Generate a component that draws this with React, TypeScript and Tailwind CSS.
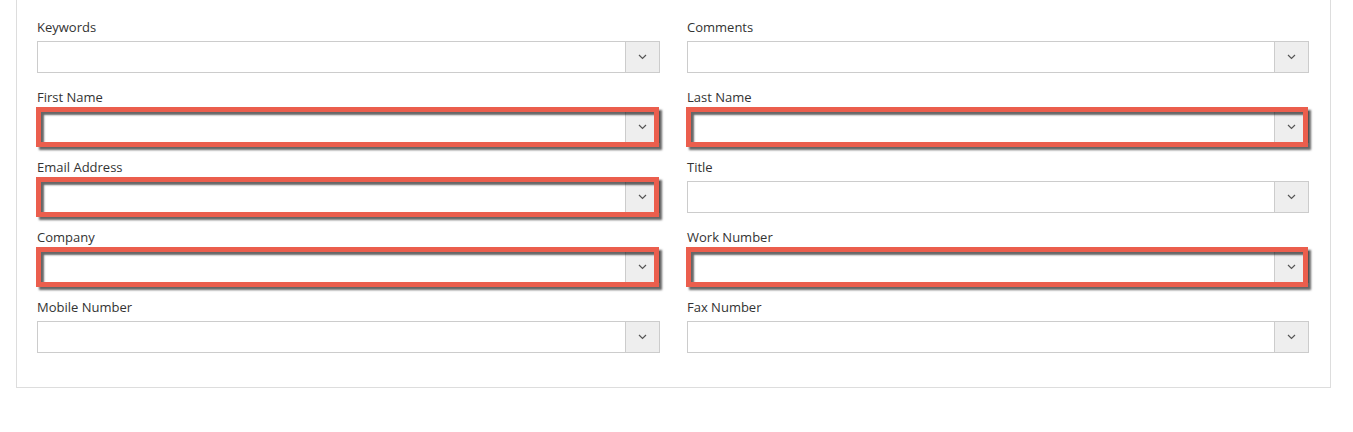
import React from "react";

type F = { label: string; hl?: boolean };

const left: F[] = [
  { label: "Keywords" },
  { label: "First Name", hl: true },
  { label: "Email Address", hl: true },
  { label: "Company", hl: true },
  { label: "Mobile Number" },
];
const right: F[] = [
  { label: "Comments" },
  { label: "Last Name", hl: true },
  { label: "Title" },
  { label: "Work Number", hl: true },
  { label: "Fax Number" },
];

function Field({ label, hl }: F) {
  return (
    <div className="flex flex-col">
      <div className="h-[18px] leading-[18px] text-[13px] text-[#333] mb-[5px]">{label}</div>
      <div className="relative flex h-[32px] border border-[#ccc] bg-white">
        <div className="flex-1" />
        <div className="w-[34px] border-l border-[#ccc] bg-[#eee] flex items-center justify-center">
          <svg width="9" height="6" viewBox="0 0 9 6">
            <polyline points="1,1 4.5,4.5 8,1" fill="none" stroke="#555" strokeWidth="1.2" />
          </svg>
        </div>
        {hl && (
          <div className="pointer-events-none absolute left-[-2px] right-[0px] top-[-5px] bottom-[-5px] border-[5px] border-[#eb5e4d] shadow-[3px_3px_2px_rgba(0,0,0,0.6),inset_3px_3px_2px_rgba(0,0,0,0.6)]" />
        )}
      </div>
    </div>
  );
}

export default function App() {
  return (
    <div className="w-[1353px] h-[432px] bg-white font-['Open_Sans',sans-serif]">
      <div className="ml-[16px] w-[1315px] border border-t-0 border-[#ddd] pt-[18px] pb-[34px] px-[20px]">
        <div className="grid grid-cols-[623px_622px] gap-x-[27px]">
          <div className="flex flex-col gap-[15px]">
            {left.map((f) => (
              <Field key={f.label} {...f} />
            ))}
          </div>
          <div className="flex flex-col gap-[15px]">
            {right.map((f) => (
              <Field key={f.label} {...f} />
            ))}
          </div>
        </div>
      </div>
    </div>
  );
}
